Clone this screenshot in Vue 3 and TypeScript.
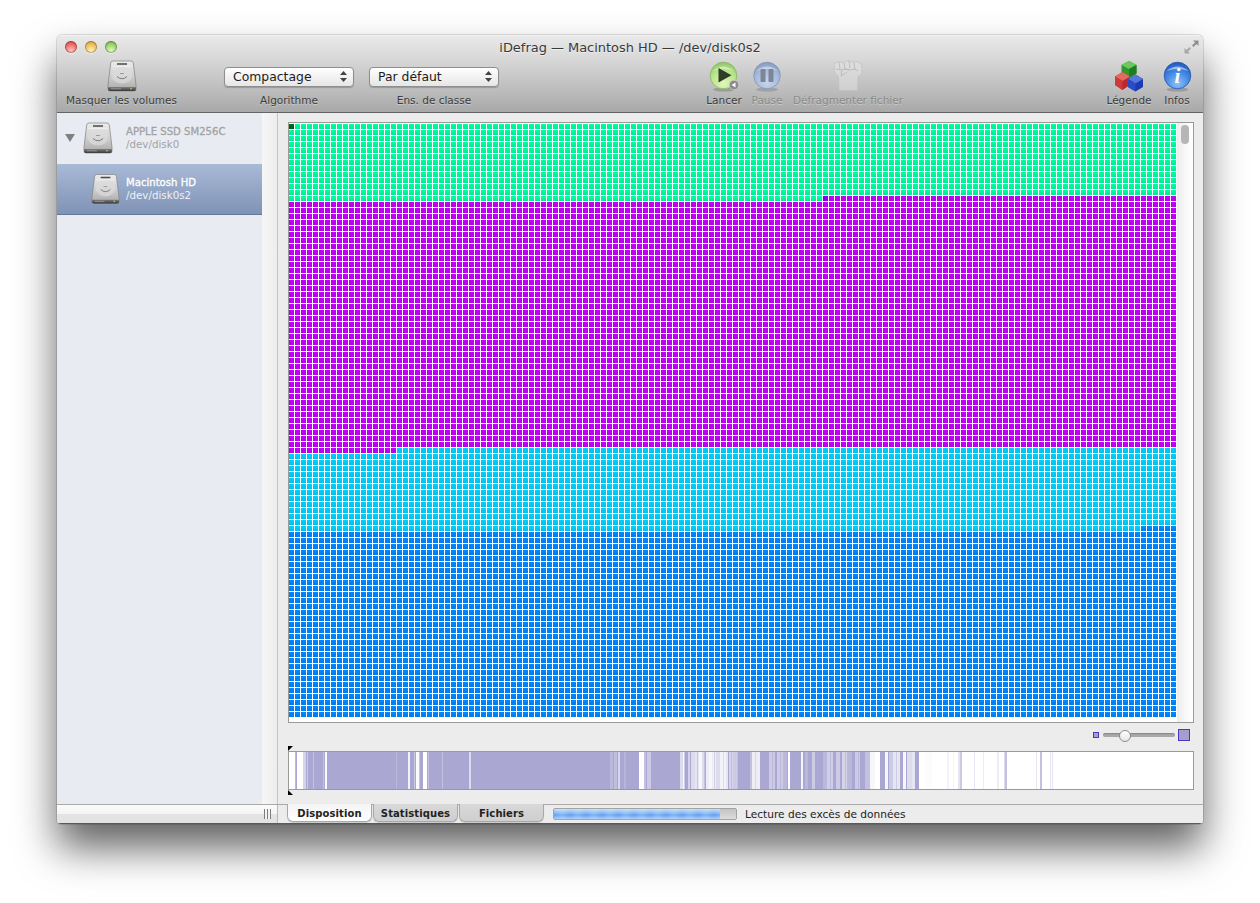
<script setup lang="ts">
import { onMounted, ref } from 'vue'

const COLS = 148
const ROWS = 99
const CELL = 5
const PITCH = 6

const gridEl = ref<HTMLCanvasElement | null>(null)

// top to bottom shades of one cell
const SHADES: Record<string, string[]> = {
  green: ['#00fca4', '#00f89f', '#00f49a', '#00f096', '#00ec92'],
  purple: ['#c400f8', '#c100f5', '#be00f2', '#bb00ef', '#b800ec'],
  cyan: ['#00d0fa', '#00ccf7', '#00c8f4', '#00c4f1', '#00c0ee'],
  blue: ['#0088fc', '#0085f9', '#0082f6', '#007ff3', '#007cf0'],
  edge: ['#8c00f4', '#8800f0', '#8400ec', '#8000e8', '#7c00e4'],
  first: ['#006a10', '#00660e', '#00620c', '#005e0a', '#005a08'],
}

const cellKind = (col: number, row: number) => {
  if (row === 0 && col === 0) return 'first'
  if (row === 12 && col === 89) return 'edge'
  if (row < 12 || (row === 12 && col < 89)) return 'green'
  if (row < 54 || (row === 54 && col < 18)) return 'purple'
  if (row < 67 || (row === 67 && col < 142)) return 'cyan'
  return 'blue'
}

onMounted(() => {
  const ctx = gridEl.value?.getContext('2d')
  if (!ctx) return
  for (let row = 0; row < ROWS; row++) {
    for (let col = 0; col < COLS; col++) {
      const shades = SHADES[cellKind(col, row)]
      for (let i = 0; i < CELL; i++) {
        ctx.fillStyle = shades[i]
        ctx.fillRect(col * PITCH, 1 + row * PITCH + i, CELL, 1)
      }
    }
  }
})

// overview bar, x is relative to the bar's inner left edge (289)
type Stripe = [number, number, number]
const abs = (list: Stripe[]): Stripe[] => list.map(([x, w, o]) => [x - 289, w, o])

const lightStripes = abs([
  [289, 6, 1], [295, 1, 0.2], [297, 6, 1], [303, 3, 0.5], [307, 1, 0.4], [313, 1, 0.3], [323, 1, 0.3], [325, 2, 0.95],
  [396, 1, 0.2], [408, 2, 0.85], [414, 1, 0.4], [416, 3, 0.95], [419, 1, 0.3], [423, 4, 1], [428, 1, 0.3], [442, 1, 0.3],
  [469, 2, 0.6], [610, 3, 0.2], [614, 3, 0.25], [618, 2, 0.55], [624, 2, 0.15], [639, 5, 1], [644, 2, 0.3], [647, 4, 0.4],
  [680, 3, 0.6], [683, 2, 0.9], [688, 2, 0.5], [691, 4, 0.6], [695, 4, 0.7], [699, 3, 0.9], [702, 3, 0.6], [706, 3, 0.8],
  [709, 3, 0.9], [712, 4, 0.8], [716, 4, 0.6], [720, 6, 0.85], [726, 2, 0.7], [729, 4, 0.5], [733, 4, 0.4],
  [737, 1, 0.3], [750, 2, 0.3], [752, 8, 0.8], [769, 6, 0.4], [777, 6, 0.4], [783, 4, 0.2], [788, 2, 1], [801, 2, 0.9],
  [805, 3, 0.2], [812, 3, 0.4], [823, 4, 0.2], [827, 6, 0.45], [836, 4, 0.4], [842, 5, 0.5], [847, 5, 0.2], [855, 5, 0.4],
  [865, 5, 0.3], [870, 5, 0.9], [875, 5, 1], [885, 3, 0.9], [889, 4, 0.4], [893, 7, 0.7], [903, 3, 0.9], [907, 5, 0.6], [912, 3, 0.7],
])

const darkStripes = abs([
  [684, 1, 0.5], [690, 1, 0.6], [697, 1, 0.5], [704, 1, 0.5], [714, 1, 0.4], [723, 1, 0.3], [731, 1, 0.5], [755, 1, 0.3], [772, 1, 0.5], [780, 1, 0.5], [830, 1, 0.5], [845, 1, 0.5], [858, 1, 0.5], [896, 1, 0.4],
  [926, 6, 0.03], [947, 2, 0.15], [953, 1, 0.12], [958, 2, 0.3], [960, 2, 0.6], [974, 1, 0.3], [983, 1, 0.2],
  [997, 2, 0.2], [1004, 1, 0.4], [1005, 2, 0.7], [1036, 1, 0.3], [1040, 2, 0.7], [1050, 1, 0.3], [1052, 1, 0.3],
])
</script>

<template>
  <div class="page">
    <svg class="sprites" width="0" height="0" aria-hidden="true">
      <defs>
        <linearGradient id="hd-body" x1="0" y1="0" x2="0" y2="1">
          <stop offset="0" stop-color="#ececec" />
          <stop offset="0.5" stop-color="#d0d0d0" />
          <stop offset="1" stop-color="#a8a8a8" />
        </linearGradient>
        <linearGradient id="hd-base" x1="0" y1="0" x2="0" y2="1">
          <stop offset="0" stop-color="#808080" />
          <stop offset="1" stop-color="#383838" />
        </linearGradient>
        <radialGradient id="play-fill" cx="0.5" cy="0.8" r="0.85">
          <stop offset="0" stop-color="#e2f6bc" />
          <stop offset="0.6" stop-color="#b6e488" />
          <stop offset="1" stop-color="#88c060" />
        </radialGradient>
        <radialGradient id="pause-fill" cx="0.5" cy="0.75" r="0.8">
          <stop offset="0" stop-color="#c6d6ec" />
          <stop offset="0.6" stop-color="#a4b8d8" />
          <stop offset="1" stop-color="#7e93b8" />
        </radialGradient>
        <radialGradient id="info-fill" cx="0.5" cy="0.8" r="0.85">
          <stop offset="0" stop-color="#8cc2f8" />
          <stop offset="0.55" stop-color="#3f86e2" />
          <stop offset="1" stop-color="#1c52b8" />
        </radialGradient>
        <linearGradient id="fist-fill" x1="0" y1="0" x2="0" y2="1">
          <stop offset="0" stop-color="#dedede" />
          <stop offset="1" stop-color="#d0d0d0" />
        </linearGradient>
        <symbol id="hd" viewBox="0 0 30 32">
          <path d="M6 1h18q2 0 2.300 2L29 25v4q0 2-2 2H3q-2 0-2-2v-4L3.700 3Q4 1 6 1z" fill="url(#hd-body)" stroke="#808080" stroke-width="0.7" />
          <path d="M10 3.200h10v1.600H10z" fill="#4a4a4a" />
          <path d="M5.500 6.500h19" stroke="#fff" stroke-width="0.7" opacity="0.7" />
          <ellipse cx="15" cy="15.500" rx="10" ry="8" fill="#dcdcdc" opacity="0.7" />
          <path d="M10 16.500q5 4.500 10 0" fill="none" stroke="#7c7c7c" stroke-width="1" />
          <path d="M13 13.500h4" stroke="#9a9a9a" stroke-width="1" />
          <path d="M1 27h28v2q0 2-2 2H3q-2 0-2-2z" fill="url(#hd-base)" />
          <circle cx="24" cy="28.800" r="0.8" fill="#b8e070" />
          <path d="M4 28.800h10" stroke="#aaa" stroke-width="0.7" />
        </symbol>
      </defs>
    </svg>

    <div class="window">
      <header class="chrome">
        <div class="titlebar">
          <div class="lights">
            <span class="light red"></span>
            <span class="light yellow"></span>
            <span class="light green"></span>
          </div>
          <div class="title">iDefrag — Macintosh HD — /dev/disk0s2</div>
          <svg class="fullscreen" width="15" height="14" viewBox="0 0 15 14">
            <path d="M14.500 0.500v5.500l-2-2-3 3-1.500-1.500 3-3-2-2z" fill="#8e8e8e" />
            <path d="M0.500 13.500V8l2 2 3-3 1.500 1.500-3 3 2 2z" fill="#a8a8a8" />
          </svg>
        </div>

        <div class="toolbar">
          <div class="tool hide-volumes">
            <svg class="tool-icon" width="30" height="32"><use href="#hd" /></svg>
            <span class="tool-label">Masquer les volumes</span>
          </div>

          <div class="tool popup-tool first-popup">
            <div class="popup-slot">
              <div class="popup">
                <span>Compactage</span>
                <svg width="7" height="11" viewBox="0 0 7 11"><path d="M3.500 0 7 4H0zM3.500 11 0 7h7z" fill="#444" /></svg>
              </div>
            </div>
            <span class="tool-label">Algorithme</span>
          </div>

          <div class="tool popup-tool">
            <div class="popup-slot">
              <div class="popup">
                <span>Par défaut</span>
                <svg width="7" height="11" viewBox="0 0 7 11"><path d="M3.500 0 7 4H0zM3.500 11 0 7h7z" fill="#444" /></svg>
              </div>
            </div>
            <span class="tool-label">Ens. de classe</span>
          </div>

          <div class="tool run">
            <svg class="tool-icon" width="32" height="32" viewBox="0 0 32 32">
              <ellipse cx="16" cy="29.500" rx="11" ry="2" fill="#000" opacity="0.18" />
              <circle cx="15.500" cy="15.500" r="13.300" fill="url(#play-fill)" stroke="#82ae5c" stroke-width="0.7" />
              <path d="M5 11q10-9 21 0-10-4-21 0z" fill="#fff" opacity="0.45" />
              <path d="M10.500 8v14.500l13-7.250z" fill="#2f3d24" />
              <circle cx="26" cy="25" r="4.800" fill="#8b8b8b" stroke="#ddd" stroke-width="0.6" />
              <path d="M23.500 25l4-2.500v5z" fill="#fff" />
            </svg>
            <span class="tool-label">Lancer</span>
          </div>

          <div class="tool pause dim">
            <svg class="tool-icon" width="30" height="32" viewBox="0 0 30 32">
              <ellipse cx="15" cy="29.500" rx="11" ry="2" fill="#000" opacity="0.14" />
              <circle cx="15" cy="15.500" r="13.300" fill="url(#pause-fill)" stroke="#7a8fb4" stroke-width="0.7" />
              <path d="M4 11q11-9 22 0-11-4-22 0z" fill="#fff" opacity="0.4" />
              <rect x="8.500" y="9" width="5" height="13" rx="0.8" fill="#7d8699" />
              <rect x="16.500" y="9" width="5" height="13" rx="0.8" fill="#7d8699" />
            </svg>
            <span class="tool-label">Pause</span>
          </div>

          <div class="tool defrag dim">
            <svg class="tool-icon" width="30" height="32" viewBox="0 0 30 32">
              <path d="M1 3.500 6 1.500l4.500 1.500L15 .5l5 2 4-1 4.500 2.500.5 9-4 4-.5 13.500H6L5.500 17 1.500 12z" fill="url(#fist-fill)" stroke="#c0c0c0" stroke-width="0.7" />
              <path d="M6 2l1 7M11 3l1 6 4 1M16 1l1 7M21 3l1 7M3 9l5 1 4-1 5 1 5-1 3 2M9 10l-1 6M8 16l6-4" fill="none" stroke="#b0b0b0" stroke-width="0.7" />
            </svg>
            <span class="tool-label">Défragmenter fichier</span>
          </div>

          <div class="spacer"></div>

          <div class="tool legend">
            <svg class="tool-icon" width="32" height="32" viewBox="0 0 32 32">
              <path d="M16 1l7.500 4v8.500L16 18l-7.500-4.500V5z" fill="#2f9a2b" />
              <path d="M16 1l7.500 4L16 9 8.500 5z" fill="#68c95c" />
              <path d="M16 9v9l7.500-4.500V5z" fill="#1f7c22" />
              <path d="M9.500 12 17 16.500V25l-7.500 5L2 25v-8.500z" fill="#b92a2a" />
              <path d="M9.500 12 17 16.500 9.500 21 2 16.500z" fill="#e36a5f" />
              <path d="M9.500 21v9L2 25v-8.500z" fill="#cf3b38" />
              <path d="M22.500 14.500l7.500 4.500v8l-7.500 4.500L15 27v-8z" fill="#1d3bb0" />
              <path d="M22.500 14.500 30 19l-7.500 4.500L15 19z" fill="#5776dc" />
              <path d="M22.500 23.500v8L15 27v-8z" fill="#2a4cc8" />
            </svg>
            <span class="tool-label">Légende</span>
          </div>

          <div class="tool info">
            <svg class="tool-icon" width="30" height="32" viewBox="0 0 30 32">
              <ellipse cx="15.500" cy="29.500" rx="11" ry="2" fill="#000" opacity="0.18" />
              <circle cx="15.500" cy="15.500" r="13.300" fill="url(#info-fill)" stroke="#1d48a4" stroke-width="0.7" />
              <path d="M4.500 11q11-9 22 0-11-4-22 0z" fill="#fff" opacity="0.5" />
              <text x="15.500" y="23" text-anchor="middle" class="info-i">i</text>
            </svg>
            <span class="tool-label">Infos</span>
          </div>
        </div>
      </header>

      <div class="body">
        <aside class="sidebar">
          <div class="sidebar-list">
            <div class="volume disk">
              <span class="disclosure"></span>
              <svg width="30" height="32"><use href="#hd" /></svg>
              <div class="volume-text">
                <strong>APPLE SSD SM256C</strong>
                <span>/dev/disk0</span>
              </div>
            </div>
            <div class="volume partition">
              <svg width="29" height="32"><use href="#hd" /></svg>
              <div class="volume-text">
                <strong>Macintosh HD</strong>
                <span>/dev/disk0s2</span>
              </div>
            </div>
          </div>
          <div class="splitter"></div>
        </aside>

        <main class="main">
          <div class="map">
            <canvas ref="gridEl" class="map-canvas" width="888" height="599"></canvas>
            <div class="scroller"><span class="thumb"></span></div>
          </div>

          <div class="zoom-row">
            <span class="swatch small"></span>
            <div class="track"><span class="knob"></span></div>
            <span class="swatch large"></span>
          </div>

          <div class="overview">
            <span class="marker top"></span>
            <span class="marker bottom"></span>
            <svg class="overview-svg" width="904" height="37" viewBox="0 0 904 37" preserveAspectRatio="none">
              <rect x="0" y="0" width="630" height="37" fill="#aba7d3" />
              <rect v-for="(s, i) in lightStripes" :key="`l-${i}`" :x="s[0]" y="0" :width="s[1]" height="37" fill="#fff" :opacity="s[2]" />
              <rect v-for="(s, i) in darkStripes" :key="`d-${i}`" :x="s[0]" y="0" :width="s[1]" height="37" fill="#aba7d3" :opacity="s[2]" />
            </svg>
          </div>
        </main>
      </div>

      <footer class="status">
        <div class="status-left"><span class="grip"></span></div>
        <div class="status-right">
          <div class="tabs">
            <span class="tab active">Disposition</span>
            <span class="tab">Statistiques</span>
            <span class="tab">Fichiers</span>
          </div>
          <div class="progress"><span class="progress-fill"></span></div>
          <span class="status-text">Lecture des excès de données</span>
        </div>
      </footer>
    </div>
  </div>
</template>

<style>
html,
body {
  margin: 0;
  background: #fff;
}
</style>

<style scoped>
.page {
  height: 903px;
  box-sizing: border-box;
  padding: 35px 0 0 57px;
  overflow: hidden;
  font-family: "DejaVu Sans", sans-serif;
}

.sprites {
  position: absolute;
}

.window {
  width: 1146px;
  height: 789px;
  display: flex;
  flex-direction: column;
  border-radius: 5px 5px 4px 4px;
  background: #ececec;
  box-shadow: 0 24px 40px rgba(0, 0, 0, 0.62), 0 0 0 1px rgba(0, 0, 0, 0.12);
  overflow: hidden;
}

.chrome {
  height: 78px;
  box-sizing: border-box;
  border-bottom: 1px solid #646464;
  border-top: 1px solid #f2f2f2;
  background: linear-gradient(#e9e9e9, #d8d8d8 30%, #bababa 75%, #a8a8a8);
  flex: none;
}

.titlebar {
  height: 22px;
  display: grid;
  grid-template-columns: 1fr auto 1fr;
  align-items: center;
  padding: 0 4px 0 8px;
}

.lights {
  display: flex;
  gap: 8px;
}

.light {
  width: 12px;
  height: 12px;
  border-radius: 50%;
  box-shadow: inset 0 0 0 1px rgba(0, 0, 0, 0.25), 0 1px 0 rgba(255, 255, 255, 0.5);
}

.light.red {
  background: radial-gradient(circle at 50% 80%, #ffc4c0, #ee6e68 55%, #bb3432);
}

.light.yellow {
  background: radial-gradient(circle at 50% 80%, #fff0bc, #eec058 55%, #bc8c30);
}

.light.green {
  background: radial-gradient(circle at 50% 80%, #e0f8c0, #9ad46e 55%, #5e9b36);
}

.title {
  margin-left: -4px;
  font-size: 12.950px;
  color: #3a3a3a;
  text-shadow: 0 1px 0 rgba(255, 255, 255, 0.55);
  white-space: nowrap;
}

.fullscreen {
  justify-self: end;
}

.toolbar {
  display: flex;
  padding: 2px 12px 0 9px;
}

.tool {
  display: flex;
  flex-direction: column;
  align-items: center;
  flex: none;
}

.tool-icon {
  display: block;
  height: 32px;
}

.tool-label {
  margin-top: 1px;
  font-size: 10.500px;
  line-height: 14px;
  color: #3c3c3c;
  text-shadow: 0 1px 0 rgba(255, 255, 255, 0.35);
  white-space: nowrap;
}

.dim .tool-label {
  color: #8a8a8a;
}

.hide-volumes {
  width: 111px;
}

.popup-tool {
  width: 130px;
  margin-left: 15px;
}

.first-popup {
  margin-left: 47px;
}

.popup-slot {
  height: 32px;
  width: 100%;
  display: flex;
  align-items: center;
}

.popup {
  width: 100%;
  height: 20px;
  box-sizing: border-box;
  margin-top: 1px;
  display: flex;
  align-items: center;
  justify-content: space-between;
  padding: 0 6px 0 8px;
  border: 1px solid #8e8e8e;
  border-radius: 4px;
  background: linear-gradient(#fff, #f2f2f2 50%, #e6e6e6);
  box-shadow: 0 1px 1px rgba(0, 0, 0, 0.2);
  font-size: 12.400px;
  color: #1c1c1c;
}

.run {
  width: 36px;
  margin-left: 207px;
}

.pause {
  width: 32px;
  margin-left: 9px;
}

.defrag {
  width: 110px;
  margin-left: 10px;
}

.spacer {
  flex: 1;
}

.legend {
  width: 46px;
}

.info {
  width: 28px;
  margin-left: 11px;
}

.info-i {
  font-family: "Liberation Serif", serif;
  font-style: italic;
  font-weight: 700;
  font-size: 21px;
  fill: #fff;
}

.body {
  flex: 1;
  min-height: 0;
  display: flex;
}

.sidebar {
  width: 220px;
  flex: none;
  display: flex;
  border-right: 1px solid #c4c4c4;
}

.sidebar-list {
  width: 205px;
  flex: none;
  background: #e8ecf2;
}

.splitter {
  flex: 1;
  background: linear-gradient(90deg, #f6f6f6, #ededed);
}

.volume {
  height: 51px;
  box-sizing: border-box;
  display: flex;
  align-items: center;
}

.disk {
  padding: 0 0 2px 8px;
}

.disclosure {
  width: 0;
  height: 0;
  margin-right: 8px;
  border-left: 5px solid transparent;
  border-right: 5px solid transparent;
  border-top: 8px solid #808080;
}

.partition {
  padding-left: 34px;
  background: linear-gradient(#a8bad6, #8093b6);
  border-bottom: 1px solid #64789e;
  color: #fff;
}

.volume-text {
  display: flex;
  flex-direction: column;
  margin-left: 13px;
  font-size: 10.300px;
  line-height: 13px;
  color: #a2a2a2;
}

.partition .volume-text {
  margin-left: 6px;
  color: #eef2f8;
}

.volume-text strong {
  font-weight: 400;
  font-size: 10.100px;
  -webkit-text-stroke: 0.3px currentColor;
}

.partition .volume-text strong {
  color: #fff;
}

.main {
  flex: 1;
  min-width: 0;
  box-sizing: border-box;
  padding: 9px 9px 0 10px;
  display: flex;
  flex-direction: column;
}

.map {
  height: 601px;
  flex: none;
  box-sizing: border-box;
  display: flex;
  border: 1px solid #999;
  background: #fff;
}

.map-canvas {
  display: block;
  flex: none;
}

.scroller {
  flex: 1;
  display: flex;
  justify-content: center;
  background: linear-gradient(90deg, #ececec, #f8f8f8 50%, #fff);
}

.thumb {
  width: 8px;
  height: 19px;
  margin-top: 2px;
  border-radius: 4px;
  background: #b6b6b6;
}

.zoom-row {
  height: 28px;
  flex: none;
  display: flex;
  align-items: center;
  justify-content: flex-end;
  padding: 0 4px 4px 0;
  box-sizing: border-box;
}

.swatch {
  box-sizing: border-box;
  border: 1px solid #4a38bc;
  background: #a49ed0;
}

.swatch.small {
  width: 6px;
  height: 6px;
  margin-right: 4px;
}

.swatch.large {
  width: 12px;
  height: 12px;
  margin-left: 3px;
}

.track {
  position: relative;
  width: 72px;
  height: 4px;
  border-radius: 2px;
  background: #a8a8a8;
  box-shadow: inset 0 1px 1px rgba(0, 0, 0, 0.2);
}

.knob {
  position: absolute;
  left: 16px;
  top: -3px;
  width: 10px;
  height: 10px;
  border-radius: 50%;
  border: 1px solid #8a8a8a;
  background: linear-gradient(#fff, #e6e6e6);
}

.overview {
  position: relative;
  height: 39px;
  flex: none;
  box-sizing: border-box;
  border: 1px solid #999;
  background: #fff;
}

.overview-svg {
  display: block;
}

.marker {
  position: absolute;
  left: -1px;
  width: 5px;
  height: 5px;
  background: #000;
}

.marker.top {
  top: -6px;
  clip-path: polygon(0 0, 100% 0, 0 100%);
}

.marker.bottom {
  bottom: -6px;
  clip-path: polygon(0 0, 100% 100%, 0 100%);
}

.status {
  height: 20px;
  flex: none;
  display: flex;
  border-top: 1px solid #aaa;
  box-sizing: border-box;
  border-bottom: 1px solid #5a5a5a;
}

.status-left {
  width: 221px;
  flex: none;
  box-sizing: border-box;
  display: flex;
  justify-content: flex-end;
  align-items: center;
  padding-right: 6px;
  border-right: 1px solid #b8b8b8;
  background: linear-gradient(#fbfbfb, #f4f4f4 50%, #e4e4e4 50%, #e2e2e2);
}

.grip {
  width: 7px;
  height: 10px;
  background: repeating-linear-gradient(90deg, #7c7c7c 0, #7c7c7c 1px, #f4f4f4 1px, #f4f4f4 3px);
}

.status-right {
  flex: 1;
  display: flex;
  align-items: flex-start;
  padding-left: 9px;
  background: #ececec;
}

.tabs {
  display: flex;
  gap: 1px;
  height: 18px;
  margin-top: -1px;
}

.tab {
  width: 85px;
  box-sizing: border-box;
  text-align: center;
  font-size: 10px;
  letter-spacing: 0.1px;
  font-weight: 700;
  line-height: 20px;
  color: #222;
  background: linear-gradient(#d8d8d8, #cfcfcf);
  border: 1px solid #a8a8a8;
  border-top: 0;
  border-radius: 0 0 6px 6px;
  box-shadow: 0 1px 1px rgba(0, 0, 0, 0.15);
}

.tab.active {
  background: linear-gradient(#f4f4f4, #fff);
}

.progress {
  width: 184px;
  height: 12px;
  margin: 3px 0 0 9px;
  box-sizing: border-box;
  border: 1px solid #a4a4a4;
  border-radius: 2px;
  background: linear-gradient(#c4c4c4, #dcdcdc);
  overflow: hidden;
}

.progress-fill {
  display: block;
  width: 166px;
  height: 100%;
  background:
    repeating-linear-gradient(90deg, rgba(255, 255, 255, 0) 0, rgba(255, 255, 255, 0.18) 8px, rgba(255, 255, 255, 0) 16px),
    linear-gradient(#c3dcfb, #74aef2 50%, #5f9ff0 60%, #a9cdf9);
}

.status-text {
  margin-left: 8px;
  font-size: 10.600px;
  line-height: 18px;
  color: #222;
  white-space: nowrap;
}
</style>
